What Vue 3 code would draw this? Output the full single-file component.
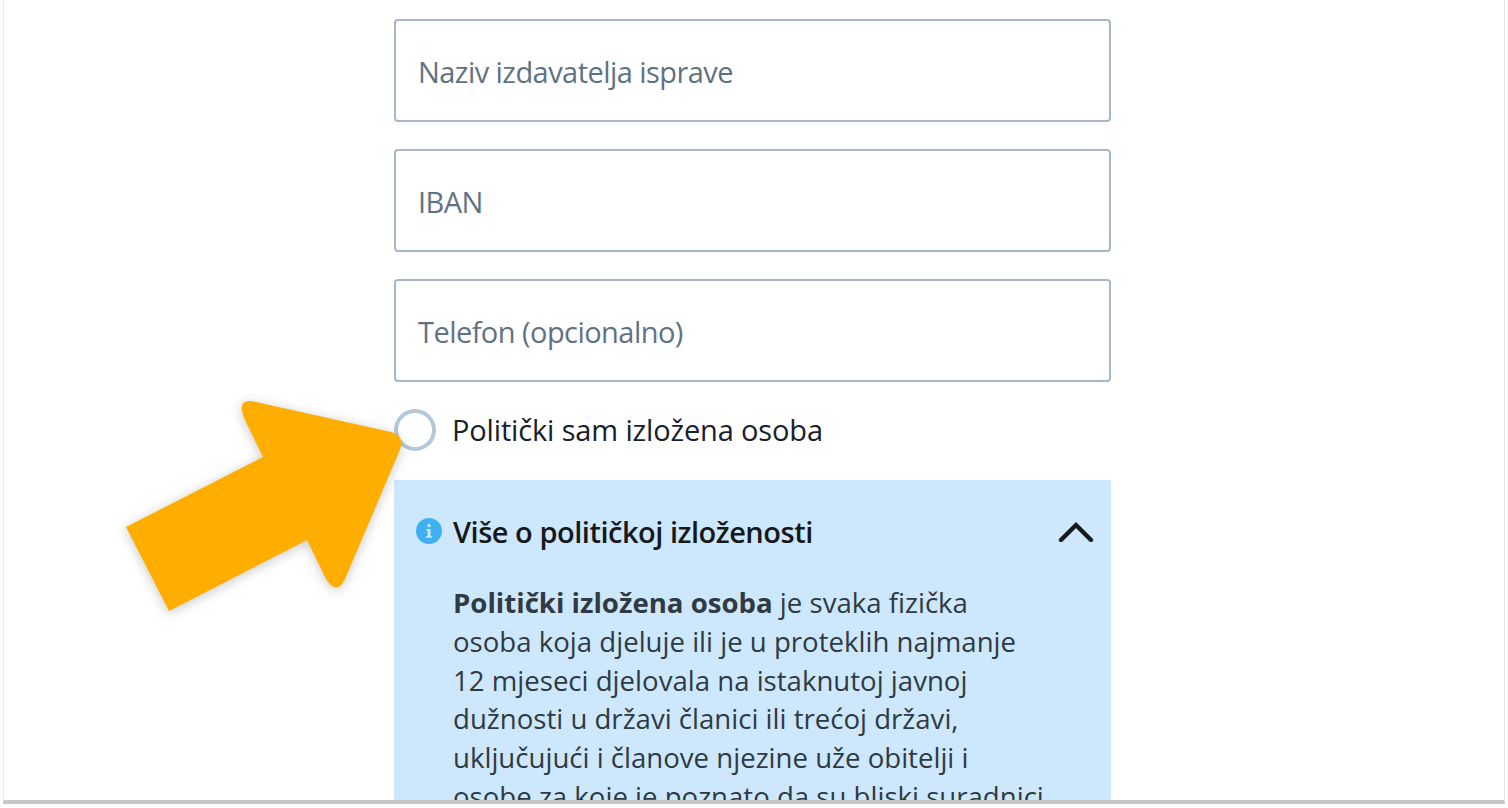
<script setup>
const fields = ['Naziv izdavatelja isprave', 'IBAN', 'Telefon (opcionalno)']
</script>

<template>
  <div class="page">
    <div class="shot">
      <div class="form">
        <div v-for="field in fields" :key="field" class="field">{{ field }}</div>

        <label class="radio-row">
          <span class="radio"></span>
          <span class="radio-label">Politički sam izložena osoba</span>
        </label>

        <section class="info">
          <div class="info-head">
            <svg class="info-icon" viewBox="0 0 26 26">
              <circle cx="13" cy="13" r="13" fill="#3fb1f0" />
              <circle cx="13" cy="7.5" r="1.7" fill="#cfe8fb" />
              <path d="M10.5 11h4v7.2h1.6v1.6H9.8v-1.6h1.8v-5.6h-1.1z" fill="#cfe8fb" />
            </svg>
            <h3>Više o političkoj izloženosti</h3>
            <svg class="chevron" viewBox="0 0 38 22">
              <path d="M4 20 L19 5 L34 20" fill="none" stroke="#16191c" stroke-width="4.4" stroke-linecap="round" stroke-linejoin="miter" />
            </svg>
          </div>
          <p class="info-text">
            <strong>Politički izložena osoba</strong> je svaka fizička<br />
            osoba koja djeluje ili je u proteklih najmanje<br />
            12 mjeseci djelovala na istaknutoj javnoj<br />
            dužnosti u državi članici ili trećoj državi,<br />
            uključujući i članove njezine uže obitelji i<br />
            osobe za koje je poznato da su bliski suradnici
          </p>
        </section>
      </div>

      <!-- annotation arrow lies over the form -->
      <svg class="arrow" viewBox="0 0 300 230">
        <path
          d="M3 138 L140 68 L122 31 Q112 8 133 13 L268 43 Q283 47 276 63 L222 190 Q214 207 203 190 L184 151 L46 222 Z"
          fill="#ffae00"
        />
      </svg>
    </div>
  </div>
</template>

<style scoped>
.page {
  width: 1508px;
  height: 808px;
  background: #fff;
  overflow: hidden;
  font-family: "Open Sans", "Noto Sans", sans-serif;
}

.shot {
  position: relative;
  box-sizing: border-box;
  width: 1502px;
  height: 804px;
  margin-left: 3px;
  padding-top: 19px;
  border-left: 1px solid #e6e6e6;
  border-right: 1px solid #e6e6e6;
  border-bottom: 4px solid #c6c6c6;
  overflow: hidden;
}

.form {
  width: 717px;
  margin-left: 390px;
  display: flex;
  flex-direction: column;
}

.field {
  box-sizing: border-box;
  height: 103px;
  margin-bottom: 27px;
  padding: 2px 0 0 22px;
  display: flex;
  align-items: center;
  border: 2px solid #a5b8cb;
  border-radius: 4px;
  color: #5f7283;
  font-size: 29px;
  letter-spacing: -0.55px;
}

.radio-row {
  display: flex;
  align-items: center;
  margin-top: -4px;
  height: 50px;
}

.radio {
  box-sizing: border-box;
  width: 42px;
  height: 42px;
  border: 4px solid #b5c8d9;
  border-radius: 50%;
  margin-right: 16px;
}

.radio-label {
  margin-bottom: 2px;
  font-size: 29px;
  color: #17212b;
  letter-spacing: -0.15px;
}

.info {
  margin-top: 25px;
  background: #cde8fd;
  padding: 30px 16px 0 22px;
  height: 400px;
}

.info-head {
  display: flex;
  align-items: center;
  height: 42px;
}

.info-icon {
  width: 26px;
  height: 26px;
  margin-right: 11px;
  flex: none;
}

.info-head h3 {
  margin: 0;
  flex: 1;
  font-size: 29px;
  font-weight: 600;
  color: #16191c;
  letter-spacing: -0.48px;
}

.chevron {
  width: 38px;
  height: 22px;
  flex: none;
}

.info-text {
  margin: 31px 0 0 37px;
  font-size: 27.6px;
  line-height: 38.8px;
  color: #2f3a42;
  white-space: nowrap;
}

.info-text strong {
  font-weight: 700;
}

.arrow {
  position: absolute;
  left: 119px;
  top: 389px;
  width: 300px;
  height: 230px;
  overflow: visible;
  filter: drop-shadow(0 2px 6px rgba(0, 0, 0, 0.22));
}
</style>
